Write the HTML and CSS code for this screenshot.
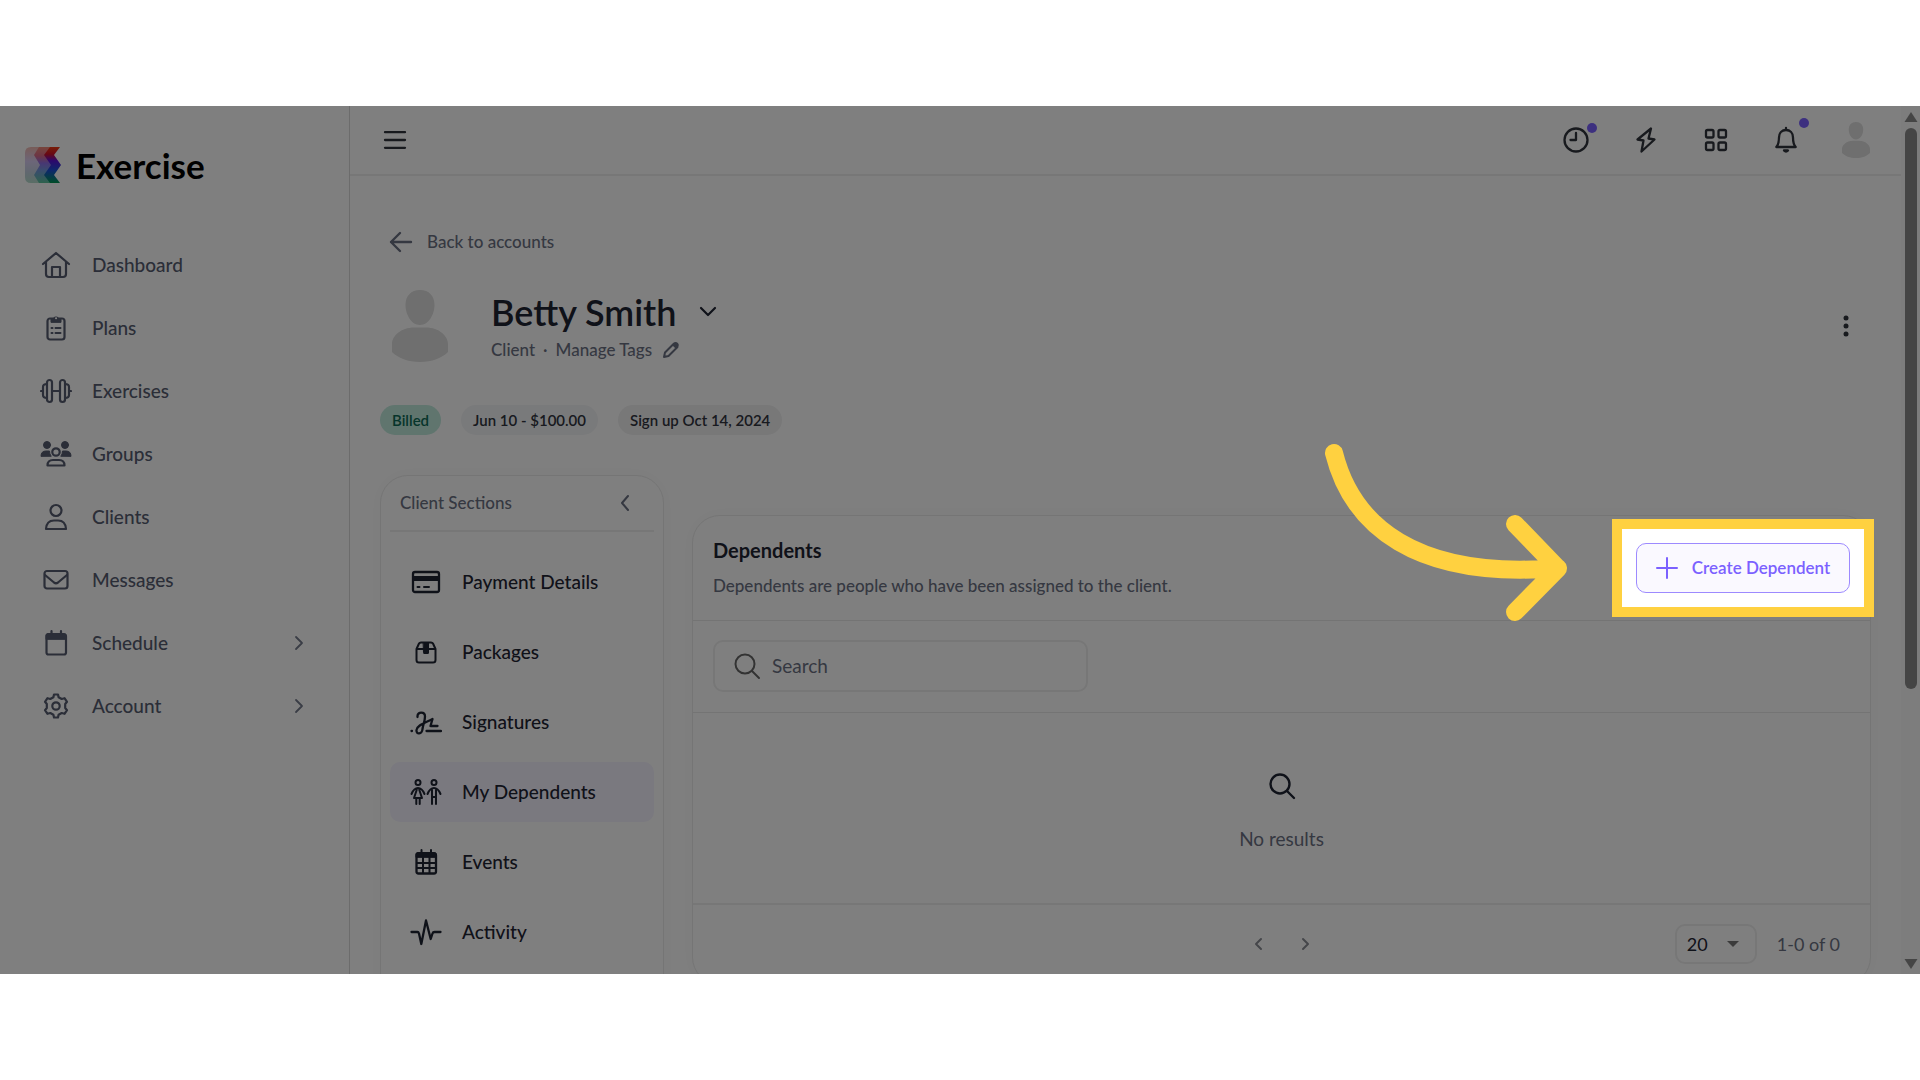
FILE: index.html
```html
<!DOCTYPE html>
<html lang="en">
<head>
<meta charset="utf-8">
<meta name="viewport" content="width=device-width, initial-scale=1">
<title>Exercise - Betty Smith</title>
<link rel="stylesheet" href="styles.css">
</head>
<body>
<div class="frame">
  <aside class="sidebar">
    <a class="brand" href="#">
      <svg width="36" height="36" viewBox="0 0 36 36" aria-hidden="true">
        <defs>
          <linearGradient id="ga" x1="0" y1="0" x2="0" y2="1"><stop offset="0" stop-color="#f0b8b0"/><stop offset=".4" stop-color="#d9cdf2"/><stop offset=".7" stop-color="#c3cfdf"/><stop offset="1" stop-color="#b4dccb"/></linearGradient>
          <linearGradient id="gb" x1="0" y1="0" x2="0" y2="1"><stop offset="0" stop-color="#f08a78"/><stop offset=".25" stop-color="#d96a8a"/><stop offset=".45" stop-color="#8f6fe8"/><stop offset=".65" stop-color="#7397dc"/><stop offset="1" stop-color="#5cc49a"/></linearGradient>
          <linearGradient id="gc" x1="0" y1="0" x2="0" y2="1"><stop offset="0" stop-color="#f03a10"/><stop offset=".2" stop-color="#d01028"/><stop offset=".38" stop-color="#5a10d8"/><stop offset=".65" stop-color="#1a50d8"/><stop offset="1" stop-color="#009a50"/></linearGradient>
        </defs>
        <path fill="url(#ga)" d="M6 0H21V36H6Q0 36 0 30V6Q0 0 6 0Z"/>
        <path fill="url(#gb)" d="M14 0H26V36H14L9 28L15 18L9 8Z"/>
        <path fill="url(#gc)" d="M25 0H35L29 8L36 18L29 28L35 36H25L19 28L26 18L19 8Z"/>
      </svg>
      <span>Exercise</span>
    </a>
    <nav class="nav">
      <a href="#"><svg width="32" height="28" viewBox="0 0 32 28"><path d="M3 13L16 2L29 13M6 11V23Q6 26 9 26H23Q26 26 26 23V11M12 26V16H20V26"/></svg><span>Dashboard</span></a>
      <a href="#"><svg width="32" height="28" viewBox="0 0 32 28"><rect x="7.500" y="4.500" width="17" height="21" rx="2.500"/><path class="fill" d="M11 8V5H13A3.200 3.200 0 0 1 19 5H21V8Z"/><path class="fill cut" d="M16 4.200h.1"/><path class="thin" d="M11.500 14h1M15.500 14h5M11.500 19h1M15.500 19h5"/></svg><span>Plans</span></a>
      <a href="#"><svg width="32" height="28" viewBox="0 0 32 28"><rect x="7" y="3" width="5" height="22" rx="2.500"/><rect x="20" y="3" width="5" height="22" rx="2.500"/><path d="M7 7Q3 7 3 10V18Q3 21 7 21M25 7Q29 7 29 10V18Q29 21 25 21M12 14H20M1 14H3M29 14H31"/></svg><span>Exercises</span></a>
      <a href="#"><svg width="32" height="28" viewBox="0 0 32 28"><circle class="fill" cx="7" cy="5" r="3.500"/><circle class="fill" cx="25" cy="5" r="3.500"/><path class="fill" d="M1 16Q1 11 6 11H9.500Q9.500 14 11 16ZM31 16Q31 11 26 11H22.500Q22.500 14 21 16Z"/><circle cx="16" cy="12" r="3.700"/><path d="M7.500 25.500Q7.500 20 13 20H19Q24.500 20 24.500 25.500Z"/></svg><span>Groups</span></a>
      <a href="#"><svg width="32" height="28" viewBox="0 0 32 28"><circle cx="16" cy="7.500" r="5.500"/><path d="M6 26Q6.500 17.500 14 17.500H18Q25.500 17.500 26 26Z"/></svg><span>Clients</span></a>
      <a href="#"><svg width="32" height="28" viewBox="0 0 32 28"><rect x="4.500" y="5" width="23" height="17.500" rx="2.500"/><path d="M5 9L14 16.500Q16 18 18 16.500L27 9"/></svg><span>Messages</span></a>
      <a href="#"><svg width="32" height="28" viewBox="0 0 32 28"><rect x="6.500" y="5.500" width="19.500" height="20" rx="2"/><path class="fill" d="M6 10V6Q6 4.500 8 4.500H24.500Q26 4.500 26 6V10Z"/><path d="M11.500 2V5M21 2V5"/></svg><span>Schedule</span><svg class="chev" width="10" height="16" viewBox="0 0 10 16"><path d="M2 2L8 8L2 14"/></svg></a>
      <a href="#"><svg width="32" height="28" viewBox="0 0 32 28"><path d="M13.400 5.200L14 2.500H18L18.600 5.200L21.700 7L24.500 6.200L27 9.800L25.200 12V16L27 18.200L24.500 21.800L21.700 21L18.600 22.800L18 25.500H14L13.400 22.800L10.300 21L7.500 21.800L5 18.200L6.800 16V12L5 9.800L7.500 6.200L10.300 7Z"/><circle cx="16" cy="14" r="3.700"/></svg><span>Account</span><svg class="chev" width="10" height="16" viewBox="0 0 10 16"><path d="M2 2L8 8L2 14"/></svg></a>
    </nav>
  </aside>

  <main class="main">
    <header class="topbar">
      <button class="icon-btn" type="button" aria-label="Toggle menu"><svg width="24" height="24" viewBox="0 0 24 24"><path d="M2 4.200H22M2 12H22M2 19.800H22"/></svg></button>
      <div class="tools">
        <button class="icon-btn" type="button" aria-label="Recent"><svg width="28" height="28" viewBox="0 0 28 28"><circle cx="14" cy="14" r="11.500"/><path d="M14 7V14H8.500"/></svg><i class="dot"></i></button>
        <button class="icon-btn" type="button" aria-label="Quick actions"><svg width="28" height="28" viewBox="0 0 28 28"><path d="M19 2.500L5.500 13.500L11.500 14.500L9.500 25.500L22.500 13.500L16.500 12.500Z"/></svg></button>
        <button class="icon-btn" type="button" aria-label="Apps"><svg width="28" height="28" viewBox="0 0 28 28"><rect x="4" y="4" width="7.500" height="7.500" rx="1.500"/><rect x="16.500" y="4" width="7.500" height="7.500" rx="1.500"/><rect x="4" y="16.500" width="7.500" height="7.500" rx="1.500"/><rect x="16.500" y="16.500" width="7.500" height="7.500" rx="1.500"/></svg></button>
        <button class="icon-btn" type="button" aria-label="Notifications"><svg width="28" height="28" viewBox="0 0 28 28"><path d="M14 2V4M4.300 21Q7 18 7 11.500C7 7 10 4 14 4S21 7 21 11.500Q21 18 23.700 21Z"/><path d="M12 24.500Q14 26.500 16 24.500Z"/></svg><i class="dot high"></i></button>
        <button class="icon-btn" type="button" aria-label="Profile"><svg class="avatar" width="28" height="36" viewBox="0 0 56 72"><path d="M28 0C37 0 42.500 6 42.500 15S37 35 28 35S13.500 24 13.500 15S19 0 28 0ZM22 37.500H34C47 37.500 56 46 56 54V62C50 68 40 72 28 72S6 68 0 62V54C0 46 9 37.500 22 37.500Z"/></svg></button>
      </div>
    </header>

    <div class="content">
      <a class="back" href="#"><svg width="24" height="24" viewBox="0 0 24 24"><path d="M11 3L2 12L11 21M2 12H22"/></svg><span>Back to accounts</span></a>

      <section class="profile">
        <svg class="avatar" width="56" height="72" viewBox="0 0 56 72" aria-hidden="true"><path d="M28 0C37 0 42.500 6 42.500 15S37 35 28 35S13.500 24 13.500 15S19 0 28 0ZM22 37.500H34C47 37.500 56 46 56 54V62C50 68 40 72 28 72S6 68 0 62V54C0 46 9 37.500 22 37.500Z"/></svg>
        <div class="who">
          <div class="name"><h1>Betty Smith</h1><button class="icon-btn" type="button" aria-label="Switch client"><svg width="20" height="20" viewBox="0 0 20 20"><path d="M3 6L10 13L17 6"/></svg></button></div>
          <div class="meta"><span>Client</span><span>·</span><a href="#">Manage Tags <svg width="18" height="18" viewBox="0 0 18 18"><path class="thin" d="M2 16L3 11.500L12 2.500Q13.500 1.500 15 3T15.500 6L6.500 15ZM11 3.500L14.500 7"/><path class="tip" d="M11 4L13 2Q15 1 16 2T16 5L14 7Z"/></svg></a></div>
        </div>
        <button class="icon-btn kebab" type="button" aria-label="More"><svg width="8" height="24" viewBox="0 0 8 24"><circle cx="4" cy="4" r="2.500"/><circle cx="4" cy="12" r="2.500"/><circle cx="4" cy="20" r="2.500"/></svg></button>
      </section>

      <div class="pills"><span class="pill green">Billed</span><span class="pill">Jun 10 - $100.00</span><span class="pill gray">Sign up Oct 14, 2024</span></div>

      <div class="columns">
        <section class="card sections">
          <div class="sections-head"><h2>Client Sections</h2><button class="icon-btn" type="button" aria-label="Collapse"><svg width="12" height="18" viewBox="0 0 12 18"><path d="M9 2L3 9L9 16"/></svg></button></div>
          <nav class="section-list">
            <a href="#"><svg width="32" height="28" viewBox="0 0 32 28"><rect x="3" y="4" width="26" height="20" rx="2"/><path class="fill" d="M3 8.500H29V12.500H3Z"/><path class="thin" d="M7.500 19H9.500M14 19H19"/></svg><span>Payment Details</span></a>
            <a href="#"><svg width="32" height="28" viewBox="0 0 32 28"><path class="thin" d="M6.500 11V22Q6.500 24.500 9 24.500H23Q25.500 24.500 25.500 22V11L23 5.500Q22.500 4.500 21 4.500H11Q9.500 4.500 9 5.500ZM6.500 11H25.500"/><path class="fill" d="M13.500 4.500H18.500V15Q18.500 15.500 18 15.500H14Q13.500 15.500 13.500 15Z"/></svg><span>Packages</span></a>
            <a href="#"><svg width="32" height="28" viewBox="0 0 32 28"><path d="M7.500 9V8C7.500 3.500 15 3.500 15 8.500C15 13 13 17 12.500 21C12 26.500 6 27 6.500 22C7 17 15 15 22.500 11L20.500 18H27.500M1.500 23H2M16.500 23H31"/></svg><span>Signatures</span></a>
            <a class="active" href="#"><svg width="32" height="28" viewBox="0 0 32 28"><g class="thin"><circle cx="8" cy="4.500" r="2.500"/><circle cx="24" cy="4.500" r="2.500"/><path d="M1.500 16Q4 10 8 10T14.500 16M7 11L4 20H12L9 11M6.300 20V26M9.700 20V26M17.500 16Q20 10 24 10T30.500 16M22 12V26M26 12V26M22 19H26"/></g></svg><span>My Dependents</span></a>
            <a href="#"><svg width="32" height="28" viewBox="0 0 32 28"><rect x="6.500" y="5.500" width="19.500" height="20" rx="2"/><path class="fill" d="M6 9V6Q6 4.500 8 4.500H24.500Q26 4.500 26 6V9Z"/><path class="thin" d="M11.500 2V5M21 2V5M7 15H26M7 20H26M13 9V25M19.500 9V25"/></svg><span>Events</span></a>
            <a href="#"><svg width="32" height="28" viewBox="0 0 32 28"><path d="M1.500 14H7.500Q8.500 14 9 15.500L11.300 26L16 2.500L20.700 21L22.500 15.500Q23 14 24.500 14H30.500"/></svg><span>Activity</span></a>
          </nav>
        </section>

        <section class="card dependents">
          <header class="dep-head">
            <div class="dep-text"><h2>Dependents</h2><p>Dependents are people who have been assigned to the client.</p></div>
            <div class="spotlight">
              <button class="create" type="button"><svg width="22" height="22" viewBox="0 0 22 22"><path d="M11 1V21M1 11H21"/></svg><span>Create Dependent</span></button>
              <svg class="pointer" width="250" height="184" viewBox="0 0 250 184" aria-hidden="true"><path d="M14 13C32 85 95 140 238 128M195 84L238 128.500L195 172"/></svg>
            </div>
          </header>
          <div class="toolbar">
            <label class="search"><svg width="28" height="28" viewBox="0 0 28 28"><circle cx="12" cy="12" r="9.500"/><path d="M19 19L26 26"/></svg><input type="text" placeholder="Search" aria-label="Search"></label>
          </div>
          <div class="empty"><svg width="28" height="28" viewBox="0 0 28 28"><circle cx="12" cy="12" r="9.500"/><path d="M19 19L26 26"/></svg><p>No results</p></div>
          <footer class="pager">
            <div class="steps">
              <button class="icon-btn" type="button" aria-label="Previous page"><svg width="10" height="14" viewBox="0 0 10 14"><path d="M7 2L2 7L7 12"/></svg></button>
              <button class="icon-btn" type="button" aria-label="Next page"><svg width="10" height="14" viewBox="0 0 10 14"><path d="M3 2L8 7L3 12"/></svg></button>
            </div>
            <div class="page-size">
              <div class="select"><select aria-label="Rows per page"><option>20</option><option>50</option></select><svg width="14" height="8" viewBox="0 0 14 8"><path d="M1 1H13L7 7Z"/></svg></div>
              <span>1-0 of 0</span>
            </div>
          </footer>
        </section>
      </div>
    </div>
  </main>

  <div class="scrollbar" aria-hidden="true">
    <svg width="14" height="10" viewBox="0 0 14 10"><path d="M7 0L13.500 10H.5Z"/></svg>
    <div class="track"><div class="thumb"></div></div>
    <svg width="14" height="10" viewBox="0 0 14 10"><path d="M7 10L13.500 0H.5Z"/></svg>
  </div>
</div>
</body>
</html>
```
FILE: styles.css
```css
:root {
  --ink: #1f2433;
  --body: #565c70;
  --muted: #6b7183;
  --line: #eee;
  --accent: #7b61ff;
  --mark: #ffd140;
}
* { box-sizing: border-box; }
body {
  margin: 0;
  height: 100vh;
  padding: 106px 0;
  background: #fff;
  color: var(--ink);
  font-family: Lato, "Open Sans", sans-serif;
  font-size: 17px;
  line-height: 28px;
}
h1, h2, p { margin: 0; }
a { color: inherit; text-decoration: none; }
svg { flex: none; fill: none; stroke: currentColor; stroke-width: 2; stroke-linecap: round; stroke-linejoin: round; }
svg .fill { fill: currentColor; stroke-width: 1; }
svg .cut { stroke: #fff; stroke-width: 2; }
svg .thin { stroke-width: 2; }
svg .tip { fill: currentColor; stroke: none; }

.frame { display: flex; height: 100%; overflow: hidden; position: relative; }

.sidebar { width: 350px; flex: none; border-right: 1px solid #d8d8d8; padding: 35px 25px 0; }
.brand { display: flex; align-items: center; gap: 15px; height: 48px; color: #000; font-size: 35px; font-weight: 700; }
.brand svg { stroke: none; }
.nav { margin-top: 44px; display: flex; flex-direction: column; }
.nav a { display: flex; align-items: center; gap: 20px; height: 63px; padding: 0 20px 0 15px; font-size: 19px; font-weight: 500; color: var(--body); }
.nav svg { stroke-width: 2.2; }
.nav .chev { margin-left: auto; stroke-width: 1.8; color: #747a8c; }

.main { flex: 1; min-width: 0; }
.topbar { display: flex; justify-content: space-between; align-items: center; height: 70px; padding: 0 30px 0 33px; border-bottom: 2px solid var(--line); color: #30343c; }
.topbar svg { stroke-width: 2.3; }
.icon-btn { display: flex; align-items: center; justify-content: center; position: relative; padding: 0; border: 0; background: none; color: inherit; }
.tools { display: flex; gap: 40px; }
.tools .icon-btn { width: 30px; height: 36px; }
.dot { position: absolute; top: 1px; right: -6px; width: 10px; height: 10px; border-radius: 50%; background: var(--accent); }
.dot.high { top: -4px; right: -8px; }
.icon-btn .avatar, .avatar { fill: #dedede; stroke: none; }

.content { padding: 46px 30px 0; }
.back { display: flex; align-items: center; gap: 14px; width: max-content; height: 40px; padding-left: 9px; font-weight: 500; color: var(--muted); }
.back svg { stroke-width: 2.4; }
.profile { display: flex; align-items: center; height: 80px; margin-top: 24px; padding-left: 12px; }
.who { flex: 1; margin-left: 43px; }
.name { display: flex; align-items: center; gap: 22px; height: 48px; }
.name h1 { font-size: 36px; line-height: 48px; font-weight: 600; }
.name svg { stroke-width: 2.2; }
.meta { display: flex; gap: 8px; height: 28px; font-weight: 500; color: var(--muted); }
.meta a { display: flex; align-items: center; gap: 10px; }
.kebab { width: 32px; height: 40px; margin-right: 9px; color: #30343c; }
.kebab svg { fill: currentColor; stroke: none; }

.pills { display: flex; gap: 20px; margin-top: 39px; }
.pill { height: 30px; padding: 0 12px; border-radius: 15px; background: #f3f4f6; font-size: 15px; line-height: 30px; font-weight: 600; color: #30343f; }
.pill.green { background: #c0eadd; color: #0e6b56; }
.pill.gray { background: #f0f0f1; }

.columns { display: grid; grid-template-columns: 284px minmax(0, 1fr); gap: 28px; align-items: start; margin-top: 40px; }
.card { border: 1px solid #eaeaea; border-radius: 28px; background: #fff; box-shadow: 0 0 20px rgba(0, 0, 0, 0.03); }
.sections { padding: 0 9px 60px; }
.sections-head { display: flex; align-items: center; justify-content: space-between; height: 56px; padding: 0 23px 0 10px; border-bottom: 2px solid var(--line); color: var(--muted); }
.sections-head h2 { font-size: 17px; font-weight: 500; }
.section-list { display: flex; flex-direction: column; gap: 10px; margin-top: 20px; }
.section-list a { display: flex; align-items: center; gap: 20px; height: 60px; padding-left: 20px; border-radius: 10px; font-size: 19px; font-weight: 500; }
.section-list svg { stroke-width: 2.3; }
.section-list .active { background: #f5f3ff; }

.dependents { margin-top: 40px; }
.dep-head { display: flex; align-items: center; justify-content: space-between; padding: 20px; border-bottom: 1px solid #e8e8e8; }
.dep-text { display: flex; flex-direction: column; gap: 8px; }
.dep-text h2 { font-size: 20px; line-height: 28px; font-weight: 700; }
.dep-text p { font-weight: 500; color: var(--muted); }

/* Walkthrough step: ring around the button, everything outside dimmed */
.spotlight { position: relative; z-index: 10; }
.spotlight::before { content: ""; position: absolute; inset: -24px; border: 10px solid var(--mark); box-shadow: 0 0 0 4000px rgba(0, 0, 0, 0.5); pointer-events: none; }
.pointer { position: absolute; top: -103px; right: 280px; stroke: var(--mark); stroke-width: 18; pointer-events: none; }
.create { display: flex; align-items: center; justify-content: center; gap: 14px; position: relative; width: 214px; height: 50px; border: 1px solid #9d8aff; border-radius: 10px; background: #faf9ff; color: var(--accent); font: inherit; font-weight: 600; }

.toolbar { padding: 19px 20px 20px; border-bottom: 1px solid #e8e8e8; }
.search { display: flex; align-items: center; gap: 9px; width: 375px; height: 52px; padding-left: 18px; border: 2px solid var(--line); border-radius: 10px; color: #666; }
.search input { flex: 1; min-width: 0; padding: 0 2px; border: 0; outline: 0; background: none; font: inherit; font-size: 19px; color: var(--ink); }
.search input::placeholder { color: var(--muted); opacity: 1; }
.empty { display: flex; flex-direction: column; align-items: center; justify-content: center; gap: 25px; height: 190px; padding-top: 8px; }
.empty svg { stroke-width: 2.4; }
.empty p { font-size: 19px; color: var(--muted); }
.pager { display: grid; grid-template-columns: 1fr auto 1fr; align-items: center; padding: 19px 30px 20px; border-top: 2px solid var(--line); font-size: 18px; color: var(--muted); }
.steps { grid-column: 2; display: flex; gap: 36px; color: #8a8d95; }
.page-size { justify-self: end; display: flex; align-items: center; gap: 20px; }
.select { display: flex; align-items: center; position: relative; }
.select select { appearance: none; width: 82px; height: 40px; padding: 0 10px; border: 2px solid var(--line); border-radius: 10px; background: none; font: inherit; color: var(--ink); }
.select svg { position: absolute; right: 17px; fill: #777; stroke: none; pointer-events: none; }

.scrollbar { flex: none; width: 19px; display: flex; flex-direction: column; align-items: center; gap: 6px; padding: 6px 0 5px; background: #fafafa; }
.scrollbar svg { fill: #8b8b8b; stroke: none; }
.track { flex: 1; width: 12px; }
.thumb { height: 68%; border-radius: 6px; background: #8b8b8b; }
```
